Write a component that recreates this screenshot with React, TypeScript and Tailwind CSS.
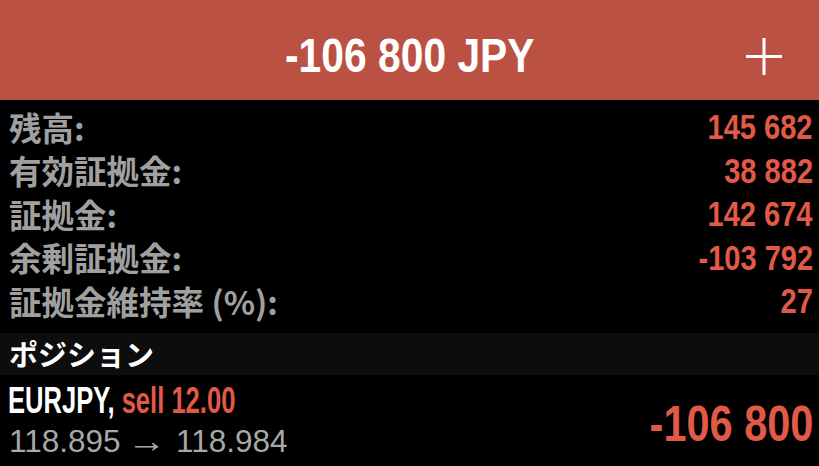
import React from 'react'

const sans = { fontFamily: '"Liberation Sans", Arial, sans-serif' }
const jp = { fontFamily: '"Noto Sans CJK JP", "Noto Sans", sans-serif' }

const rows: [string, string][] = [
    ['残高:', '145 682'],
    ['有効証拠金:', '38 882'],
    ['証拠金:', '142 674'],
    ['余剰証拠金:', '-103 792'],
    ['証拠金維持率 (%):', '27'],
]

// Helvetica Condensed is not installed, so narrow Liberation Sans Bold instead
const Cond = ({
    children,
    className = '',
    scale = 'scale-x-[0.85]',
}: {
    children: React.ReactNode
    className?: string
    scale?: string
}) => (
    <span className={`inline-block font-bold whitespace-nowrap ${scale} ${className}`} style={sans}>
        {children}
    </span>
)

export default function App() {
    return (
        <div className="h-[466px] w-[819px] overflow-hidden bg-black">
            <div className="relative flex h-[100px] items-center justify-center bg-[#bb5142] pt-[12px]">
                <Cond className="origin-center text-[48px] leading-none text-white">-106 800 JPY</Cond>
                <svg className="absolute right-[37px] top-[38px]" width="36" height="37" viewBox="0 0 36 37">
                    <path d="M18 0V37M0 18.5H36" stroke="white" strokeWidth="3" />
                </svg>
            </div>
            <div className="pt-[5px]">
                {rows.map(([label, value]) => (
                    <div key={label} className="flex h-[43.5px] items-center justify-between pl-[9px] pr-[6px]">
                        <span className="text-[32.5px] font-bold leading-none text-[#a0a0a0]" style={jp}>
                            {label}
                        </span>
                        <Cond className="origin-right text-[35px] leading-none text-[#e05a47]" scale="scale-x-[0.83]">
                            {value}
                        </Cond>
                    </div>
                ))}
            </div>
            <div className="mt-[10px] flex h-[42px] items-center bg-[#0d0d0d] pl-[9px]">
                <span className="text-[29px] font-bold leading-none text-white" style={jp}>
                    ポジション
                </span>
            </div>
            <div className="flex items-center justify-between pl-[8px] pr-[6px] pt-[6px]">
                <div className="flex flex-col">
                    <Cond className="origin-left text-[36px] leading-[40px]" scale="scale-x-[0.71]">
                        <span className="text-white">EURJPY, </span>
                        <span className="text-[#e05a47]">sell 12.00</span>
                    </Cond>
                    <span className="pl-[1px] text-[31.5px] leading-[40px] text-[#a8a8a8]" style={sans}>
                        118.895
                        <span className="ml-[10px] mr-[14px] inline-block scale-x-[1.25]">→</span>
                        118.984
                    </span>
                </div>
                <Cond className="origin-right pt-[6px] text-[50px] leading-none text-[#e05a47]" scale="scale-x-[0.83]">
                    -106 800
                </Cond>
            </div>
        </div>
    )
}
